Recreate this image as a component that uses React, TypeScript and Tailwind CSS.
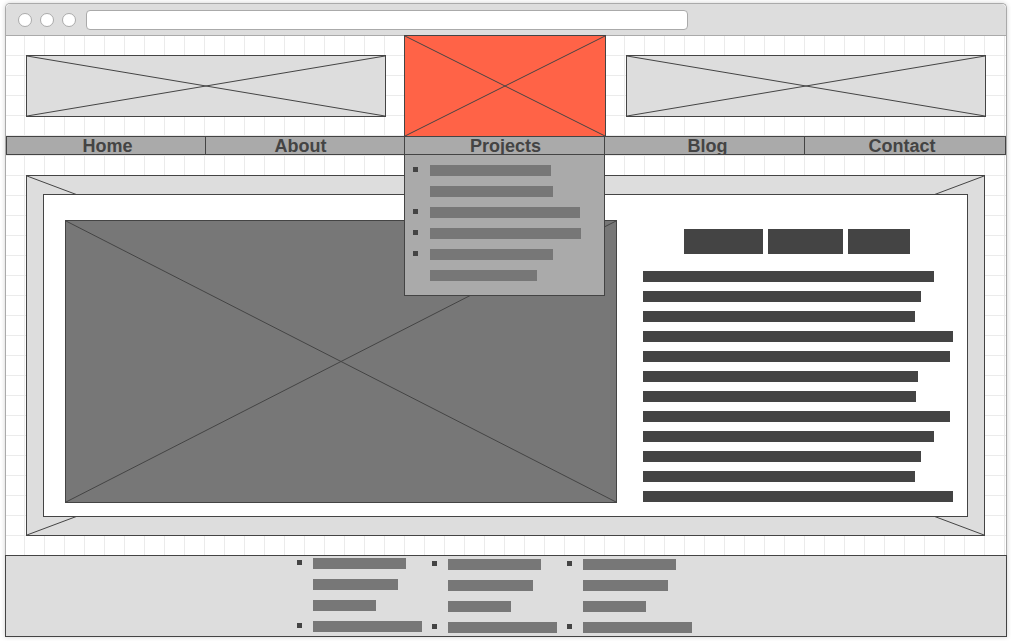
import React from "react";

function XLines({ color = "#444" }: { color?: string }) {
  return (
    <svg
      className="absolute inset-0 w-full h-full pointer-events-none"
      viewBox="0 0 100 100"
      preserveAspectRatio="none"
    >
      <line x1="0" y1="0" x2="100" y2="100" stroke={color} strokeWidth="1" vectorEffect="non-scaling-stroke" />
      <line x1="100" y1="0" x2="0" y2="100" stroke={color} strokeWidth="1" vectorEffect="non-scaling-stroke" />
    </svg>
  );
}

const textLines = [291, 278, 272, 310, 307, 275, 273, 307, 291, 278, 272, 310];
const dropItems: { w: number; b: boolean }[] = [
  { w: 121, b: true },
  { w: 123, b: false },
  { w: 150, b: true },
  { w: 151, b: true },
  { w: 123, b: true },
  { w: 107, b: false },
];
const footItems: { w: number; b: boolean }[] = [
  { w: 93, b: true },
  { w: 85, b: false },
  { w: 63, b: false },
  { w: 109, b: true },
];

export default function App() {
  return (
    <div className="w-[1011px] h-[641px] bg-white overflow-hidden pt-[3px] pl-[5px] font-['Liberation_Sans',Arial,sans-serif]">
      <div className="w-[1002px] border-x border-t border-[#aaa] rounded-t-[5px] bg-white flex flex-col shadow-[0_0_5px_rgba(0,0,0,0.18)]">
        {/* chrome */}
        <div className="h-[32px] bg-[#ddd] border-b border-[#aaa] rounded-t-[5px] flex items-center pl-[12px] gap-[8px]">
          <div className="w-[14px] h-[14px] rounded-full bg-white border border-[#aaa]" />
          <div className="w-[14px] h-[14px] rounded-full bg-white border border-[#aaa]" />
          <div className="w-[14px] h-[14px] rounded-full bg-white border border-[#aaa]" />
          <div className="ml-[2px] w-[602px] h-[20px] rounded-[4px] bg-white border border-[#aaa]" />
        </div>

        {/* body */}
        <div className="relative bg-white bg-[linear-gradient(to_right,#ebebeb_1px,transparent_1px),linear-gradient(to_bottom,#ebebeb_1px,transparent_1px)] bg-[size:20px_20px] bg-[position:18px_19px]">
          {/* header */}
          <div className="h-[100px] flex items-start pl-[20px]">
            <div className="relative mt-[19px] w-[360px] h-[62px] bg-[#ddd] border border-[#444]">
              <XLines />
            </div>
            <div className="relative z-10 ml-[18px] -mt-px w-[202px] h-[102px] bg-[#ff6347] border border-[#444]">
              <XLines />
            </div>
            <div className="relative mt-[19px] ml-[20px] w-[360px] h-[62px] bg-[#ddd] border border-[#444]">
              <XLines />
            </div>
          </div>

          {/* nav */}
          <div className="h-[19px] flex bg-[#aaa] border border-[#444] text-[18px] leading-[18px] font-bold text-[#444] overflow-hidden">
            <div className="w-[199px] border-r border-[#444] text-center pl-[3px] h-[17px] overflow-hidden">Home</div>
            <div className="w-[199px] border-r border-[#444] text-center pr-[9px] h-[17px] overflow-hidden">About</div>
            <div className="w-[200px] border-r border-[#444] text-center pl-[2px] h-[17px] overflow-hidden">Projects</div>
            <div className="w-[200px] border-r border-[#444] text-center pl-[6px] h-[17px] overflow-hidden">Blog</div>
            <div className="flex-1 text-center pr-[6px] h-[17px] overflow-hidden">Contact</div>
          </div>

          {/* main */}
          <div className="h-[400px] pt-[20px] pl-[20px]">
            <div className="relative w-[959px] h-[361px] bg-[#ddd] border border-[#444]">
              <XLines />
              <div className="relative ml-[16px] mt-[18px] w-[925px] h-[323px] bg-white border border-[#444] flex items-start">
                <div className="relative ml-[21px] mt-[25px] w-[552px] h-[283px] bg-[#777] border border-[#444]">
                  <XLines />
                </div>
                <div className="ml-[26px] mt-[34px] w-[310px] flex flex-col">
                  <div className="flex gap-[5px] pl-[41px]">
                    <div className="w-[79px] h-[25px] bg-[#444]" />
                    <div className="w-[75px] h-[25px] bg-[#444]" />
                    <div className="w-[62px] h-[25px] bg-[#444]" />
                  </div>
                  <div className="mt-[17px] flex flex-col gap-[9px]">
                    {textLines.map((w, i) => (
                      <div key={i} className="h-[11px] bg-[#444]" style={{ width: w }} />
                    ))}
                  </div>
                </div>
              </div>
            </div>
          </div>

          {/* dropdown */}
          <div className="absolute left-[398px] top-[118px] w-[201px] h-[142px] bg-[#aaa] border border-[#444] z-20 pt-[10px] pl-[8px] flex flex-col gap-[10px]">
            {dropItems.map((it, i) => (
              <div key={i} className="flex items-start h-[11px]">
                <div className={`mt-[2px] w-[5px] h-[5px] ${it.b ? "bg-[#444]" : "bg-transparent"}`} />
                <div className="ml-[12px] h-[11px] bg-[#777]" style={{ width: it.w }} />
              </div>
            ))}
          </div>
        </div>

        {/* footer */}
        <div className="-mx-px h-[82px] bg-[#ddd] border border-[#444] flex pl-[291px]">
          {[0, 1, 2].map((c) => (
            <div key={c} className={`w-[135px] flex flex-col gap-[10px] ${c === 0 ? "pt-[2px]" : "pt-[3px]"}`}>
              {footItems.map((it, i) => (
                <div key={i} className="flex items-start h-[11px]">
                  <div className={`mt-[2px] w-[5px] h-[5px] ${it.b ? "bg-[#444]" : "bg-transparent"}`} />
                  <div className="ml-[11px] h-[11px] bg-[#777]" style={{ width: it.w }} />
                </div>
              ))}
            </div>
          ))}
        </div>
      </div>
    </div>
  );
}
